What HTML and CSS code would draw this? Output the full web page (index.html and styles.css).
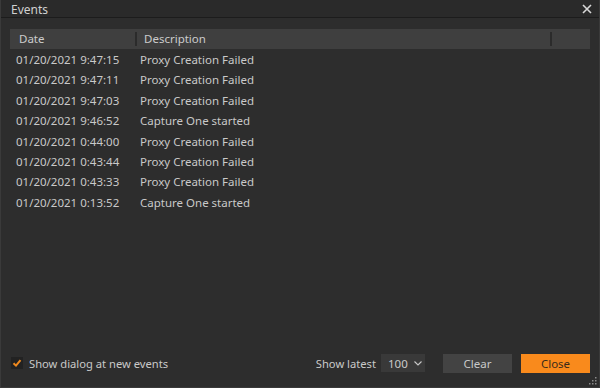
FILE: index.html
```html
<!DOCTYPE html>
<html lang="en">
<head>
  <meta charset="UTF-8">
  <title>Events</title>
  <link rel="stylesheet" href="styles.css">
</head>
<body>
  <div class="window">
    <div class="titlebar">
      <span class="title">Events</span>
      <svg class="close-x" width="10" height="10" viewBox="0 0 10 10">
        <path d="M1 1 L9 9 M9 1 L1 9" stroke="#d8d8d8" stroke-width="1.6" fill="none"/>
      </svg>
    </div>

    <div class="content">
      <div class="table">
        <div class="thead">
          <div class="th col-date">Date</div>
          <div class="th col-desc">Description</div>
          <div class="th col-end"></div>
        </div>
        <div class="tbody">
          <div class="row"><span class="col-date">01/20/2021 9:47:15</span><span class="col-desc">Proxy Creation Failed</span></div>
          <div class="row"><span class="col-date">01/20/2021 9:47:11</span><span class="col-desc">Proxy Creation Failed</span></div>
          <div class="row"><span class="col-date">01/20/2021 9:47:03</span><span class="col-desc">Proxy Creation Failed</span></div>
          <div class="row"><span class="col-date">01/20/2021 9:46:52</span><span class="col-desc">Capture One started</span></div>
          <div class="row"><span class="col-date">01/20/2021 0:44:00</span><span class="col-desc">Proxy Creation Failed</span></div>
          <div class="row"><span class="col-date">01/20/2021 0:43:44</span><span class="col-desc">Proxy Creation Failed</span></div>
          <div class="row"><span class="col-date">01/20/2021 0:43:33</span><span class="col-desc">Proxy Creation Failed</span></div>
          <div class="row"><span class="col-date">01/20/2021 0:13:52</span><span class="col-desc">Capture One started</span></div>
        </div>
      </div>

      <div class="footer">
        <label class="check">
          <span class="box">
            <svg width="10" height="10" viewBox="0 0 10 10">
              <path d="M1.5 5.2 L4 7.6 L8.5 2.2" stroke="#f0891e" stroke-width="2" fill="none"/>
            </svg>
          </span>
          Show dialog at new events
        </label>
        <div class="spacer"></div>
        <span class="latest">Show latest</span>
        <div class="select">100
          <svg width="8" height="5" viewBox="0 0 8 5">
            <path d="M0.5 0.5 L4 4 L7.5 0.5" stroke="#c8c8c8" stroke-width="1.1" fill="none"/>
          </svg>
        </div>
        <div class="btn btn-clear">Clear</div>
        <div class="btn btn-close">Close</div>
      </div>
    </div>

    <svg class="grip" width="9" height="9" viewBox="0 0 9 9">
      <rect x="7" y="1" width="1.5" height="1.5" fill="#8a8a8a"/>
      <rect x="4" y="4" width="1.5" height="1.5" fill="#8a8a8a"/>
      <rect x="7" y="4" width="1.5" height="1.5" fill="#8a8a8a"/>
      <rect x="1" y="7" width="1.5" height="1.5" fill="#8a8a8a"/>
      <rect x="4" y="7" width="1.5" height="1.5" fill="#8a8a8a"/>
      <rect x="7" y="7" width="1.5" height="1.5" fill="#8a8a8a"/>
    </svg>
  </div>
</body>
</html>
```

FILE: styles.css
```css
* { margin: 0; padding: 0; box-sizing: border-box; }
html, body {
  width: 600px;
  height: 388px;
  overflow: hidden;
  background: #2d2d2d;
  font-family: "Noto Sans", "Open Sans", sans-serif;
  font-size: 11.5px;
  color: #c9c9c9;
}
.window {
  position: relative;
  width: 600px;
  height: 388px;
  display: flex;
  flex-direction: column;
  border: 1px solid #3a3a3a;
  border-top: none;
}
.titlebar {
  height: 18px;
  background: #2a2a2a;
  border-bottom: 1px solid #1c1c1c;
  display: flex;
  align-items: center;
  padding: 1px 7px 0 10px;
}
.title {
  flex: 1;
  font-size: 12px;
  color: #d0d0d0;
}
.close-x { margin-top: -1px; }
.content {
  flex: 1;
  display: flex;
  flex-direction: column;
  padding: 11px 9px 14px 9px;
}
.table { flex: 1; }
.thead {
  height: 20px;
  background: #3f3f3f;
  display: flex;
  align-items: center;
}
.th {
  height: 20px;
  line-height: 20px;
  color: #cccccc;
  position: relative;
}
.th.col-date { width: 125px; padding-left: 9px; }
.th.col-desc { width: 415px; padding-left: 9px; }
.th.col-end { flex: 1; }
.th.col-desc::before,
.th.col-end::before {
  content: "";
  position: absolute;
  left: 0;
  top: 3px;
  width: 2px;
  height: 14px;
  background: #2b2b2b;
}
.tbody { padding-top: 1px; }
.row {
  height: 20.4px;
  line-height: 20.4px;
  display: flex;
}
.row .col-date { width: 124px; padding-left: 6px; }
.row .col-desc { padding-left: 6px; }
.footer {
  height: 20px;
  display: flex;
  align-items: center;
}
.check {
  display: flex;
  align-items: center;
  gap: 6px;
  padding-left: 1px;
  font-size: 11.2px;
}
.box {
  width: 12px;
  height: 12px;
  background: #222222;
  display: flex;
  align-items: center;
  justify-content: center;
}
.spacer { flex: 1; }
.latest { margin-right: 5px; font-size: 11.2px; }
.select {
  width: 44px;
  height: 18px;
  background: #393939;
  display: flex;
  align-items: center;
  gap: 6px;
  padding-left: 7px;
  margin-right: 18px;
}
.btn {
  width: 69px;
  height: 19px;
  line-height: 19px;
  text-align: center;
}
.btn-clear {
  background: #434343;
  color: #c9c9c9;
  margin-right: 9px;
}
.btn-close {
  background: #f98a1c;
  color: #3a2a1a;
}
.grip {
  position: absolute;
  right: 2px;
  bottom: 2px;
}
```
